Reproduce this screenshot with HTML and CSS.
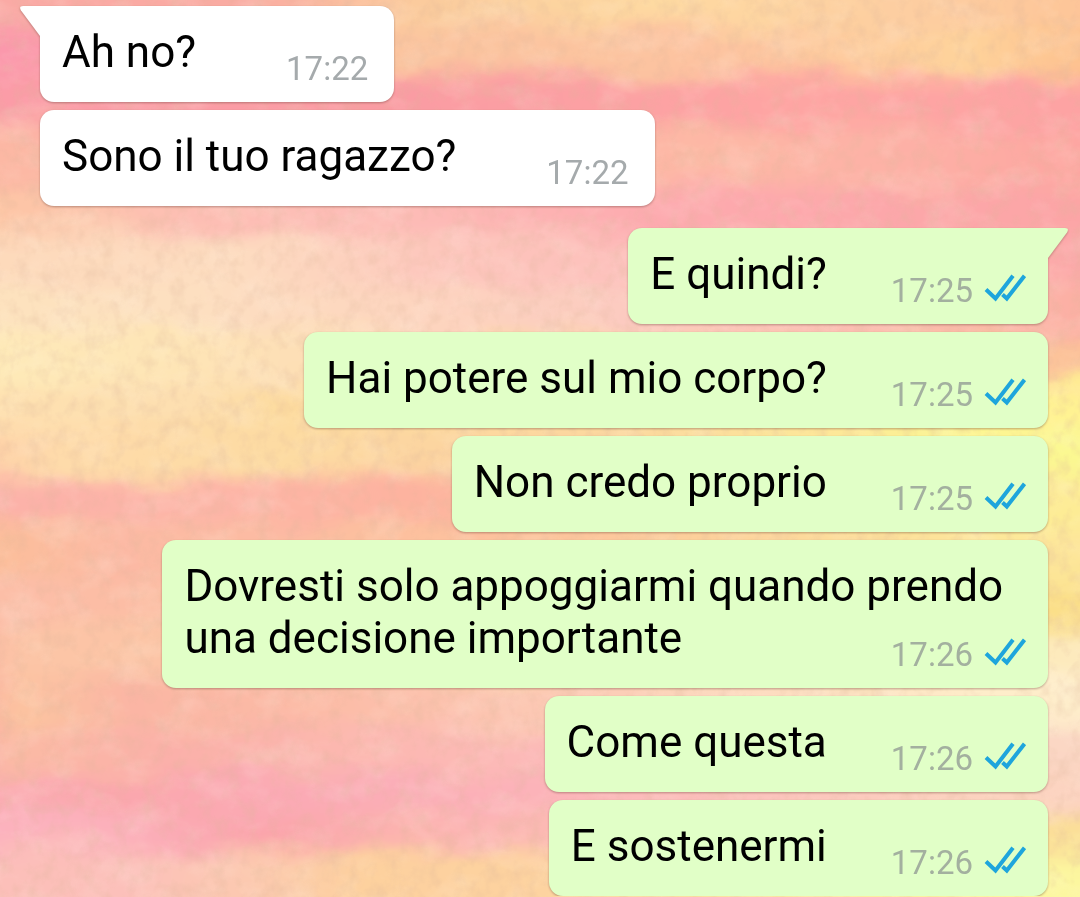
FILE: index.html
```html
<!DOCTYPE html>
<html lang="it">
<head>
  <meta charset="UTF-8" />
  <meta name="viewport" content="width=device-width, initial-scale=1" />
  <title>Chat</title>
  <link rel="stylesheet" href="styles.css">
</head>
<body>
  <!-- Watercolor wallpaper -->
  <svg class="wallpaper" viewBox="0 0 1080 897" preserveAspectRatio="none" aria-hidden="true">
    <defs>
      <linearGradient id="w1"><stop offset="0" stop-color="#faa9a6"/><stop offset=".25" stop-color="#f9aba2"/><stop offset=".4" stop-color="#fbcb9d"/><stop offset=".6" stop-color="#fedaa1"/><stop offset=".8" stop-color="#fdcea1"/><stop offset="1" stop-color="#fdc396"/></linearGradient>
      <linearGradient id="w2"><stop offset="0" stop-color="#fb97ad"/><stop offset=".2" stop-color="#fb9ca8"/><stop offset=".38" stop-color="#fbc49f"/><stop offset=".65" stop-color="#fdc3a0"/><stop offset=".85" stop-color="#fed39b"/><stop offset="1" stop-color="#fdbb8b"/></linearGradient>
      <linearGradient id="w3"><stop offset="0" stop-color="#fb9ca8"/><stop offset=".4" stop-color="#fa9ca3"/><stop offset=".7" stop-color="#fea5a3"/><stop offset="1" stop-color="#fda3a3"/></linearGradient>
      <linearGradient id="w4"><stop offset="0" stop-color="#fcb9a4"/><stop offset=".5" stop-color="#fdb0a6"/><stop offset=".63" stop-color="#fdb9a5"/><stop offset=".8" stop-color="#fdb1a6"/><stop offset="1" stop-color="#fda29f"/></linearGradient>
      <linearGradient id="w5"><stop offset="0" stop-color="#fdc8a0"/><stop offset=".2" stop-color="#fdbfb4"/><stop offset=".4" stop-color="#fdbab6"/><stop offset=".6" stop-color="#fdaaaf"/><stop offset="1" stop-color="#fca4a4"/></linearGradient>
      <linearGradient id="w6"><stop offset="0" stop-color="#fdd9ba"/><stop offset=".25" stop-color="#fddcc0"/><stop offset=".42" stop-color="#fdc6bc"/><stop offset=".6" stop-color="#fdbfbc"/><stop offset="1" stop-color="#fca4a6"/></linearGradient>
      <linearGradient id="w7"><stop offset="0" stop-color="#fde3be"/><stop offset=".2" stop-color="#fde0c0"/><stop offset=".4" stop-color="#fdd4bf"/><stop offset=".6" stop-color="#fcc9c0"/><stop offset="1" stop-color="#fcaca0"/></linearGradient>
      <linearGradient id="w8"><stop offset="0" stop-color="#feebb8"/><stop offset=".2" stop-color="#fee5b6"/><stop offset=".35" stop-color="#fddcb6"/><stop offset=".85" stop-color="#fcc6a0"/><stop offset="1" stop-color="#fcc095"/></linearGradient>
      <linearGradient id="w9"><stop offset="0" stop-color="#fee2b0"/><stop offset=".2" stop-color="#fddfb0"/><stop offset=".3" stop-color="#fddb9e"/><stop offset=".6" stop-color="#fddaa0"/><stop offset=".87" stop-color="#fff393"/><stop offset="1" stop-color="#fff292"/></linearGradient>
      <linearGradient id="w10"><stop offset="0" stop-color="#fdc9a6"/><stop offset=".1" stop-color="#fedbaa"/><stop offset=".3" stop-color="#fddba2"/><stop offset=".5" stop-color="#fccf9f"/><stop offset=".87" stop-color="#fbf892"/><stop offset="1" stop-color="#fbf890"/></linearGradient>
      <linearGradient id="w11"><stop offset="0" stop-color="#fcb0a9"/><stop offset=".2" stop-color="#fdb5a8"/><stop offset=".4" stop-color="#fdb39f"/><stop offset=".87" stop-color="#fdec96"/><stop offset="1" stop-color="#fdec94"/></linearGradient>
      <linearGradient id="w12"><stop offset="0" stop-color="#fdc196"/><stop offset=".15" stop-color="#fcb9a4"/><stop offset=".5" stop-color="#fdc49c"/><stop offset=".87" stop-color="#fde69a"/><stop offset="1" stop-color="#fde69a"/></linearGradient>
      <linearGradient id="w13"><stop offset="0" stop-color="#fcbea8"/><stop offset=".15" stop-color="#fcbda5"/><stop offset=".87" stop-color="#fbdf8a"/><stop offset="1" stop-color="#fbdf88"/></linearGradient>
      <linearGradient id="w14"><stop offset="0" stop-color="#fbb6a4"/><stop offset=".08" stop-color="#fcc5a6"/><stop offset=".3" stop-color="#fcc5a6"/><stop offset=".87" stop-color="#fdeab8"/><stop offset="1" stop-color="#fdeac0"/></linearGradient>
      <linearGradient id="w15"><stop offset="0" stop-color="#fba7a0"/><stop offset=".07" stop-color="#fcc3a0"/><stop offset=".16" stop-color="#fbb5a4"/><stop offset=".3" stop-color="#fcbaa5"/><stop offset=".48" stop-color="#fcc6b2"/><stop offset=".87" stop-color="#feedca"/><stop offset="1" stop-color="#feedcb"/></linearGradient>
      <linearGradient id="w16"><stop offset="0" stop-color="#fbaaaf"/><stop offset=".06" stop-color="#fbbaa4"/><stop offset=".2" stop-color="#fbb0a9"/><stop offset=".35" stop-color="#fcb8b0"/><stop offset=".5" stop-color="#fcb9b8"/><stop offset=".87" stop-color="#fbd7c4"/></linearGradient>
      <linearGradient id="w17"><stop offset="0" stop-color="#fbadb4"/><stop offset=".15" stop-color="#fba7ad"/><stop offset=".3" stop-color="#fbaab5"/><stop offset=".5" stop-color="#fcb3b9"/><stop offset=".87" stop-color="#fcd3c0"/></linearGradient>
      <linearGradient id="w18"><stop offset="0" stop-color="#fcb3bf"/><stop offset=".15" stop-color="#fcb0bb"/><stop offset=".27" stop-color="#fba4ab"/><stop offset=".4" stop-color="#fcb4b0"/><stop offset=".5" stop-color="#fcb8b4"/><stop offset=".87" stop-color="#fbde98"/></linearGradient>
      <linearGradient id="w19"><stop offset="0" stop-color="#fcbeb8"/><stop offset=".15" stop-color="#fcc0ba"/><stop offset=".25" stop-color="#fcc9b0"/><stop offset=".35" stop-color="#fdd09e"/><stop offset=".5" stop-color="#fdd3a0"/><stop offset=".87" stop-color="#fcf79f"/></linearGradient>
      <filter id="wash" x="0" y="0" width="100%" height="100%">
        <feGaussianBlur stdDeviation="6 9" result="soft"/>
        <feTurbulence type="fractalNoise" baseFrequency=".009 .02" numOctaves="4" seed="4" result="flow"/>
        <feDisplacementMap in="soft" in2="flow" scale="40" xChannelSelector="R" yChannelSelector="G"/>
      </filter>
      <filter id="grain" x="0" y="0" width="100%" height="100%">
        <feTurbulence type="fractalNoise" baseFrequency=".07 .06" numOctaves="3" seed="9"/>
        <feColorMatrix values="0 0 0 0 .72  0 0 0 0 .46  0 0 0 0 .32  1.6 0 0 0 -.7"/>
      </filter>
      <filter id="paper" x="0" y="0" width="100%" height="100%">
        <feTurbulence type="fractalNoise" baseFrequency=".025 .035" numOctaves="4" seed="21"/>
        <feColorMatrix values="0 0 0 0 1  0 0 0 0 .9  0 0 0 0 .8  2 0 0 0 -.9"/>
      </filter>
    </defs>
    <g filter="url(#wash)">
      <rect x="-60" y="-60" width="1200" height="90" fill="url(#w1)"/>
      <rect x="-60" y="28" width="1200" height="50" fill="url(#w2)"/>
      <rect x="-60" y="76" width="1200" height="58" fill="url(#w3)"/>
      <rect x="-60" y="132" width="1200" height="58" fill="url(#w4)"/>
      <rect x="-60" y="188" width="1200" height="50" fill="url(#w5)"/>
      <rect x="-60" y="236" width="1200" height="50" fill="url(#w6)"/>
      <rect x="-60" y="284" width="1200" height="50" fill="url(#w7)"/>
      <rect x="-60" y="332" width="1200" height="50" fill="url(#w8)"/>
      <rect x="-60" y="380" width="1200" height="52" fill="url(#w9)"/>
      <rect x="-60" y="430" width="1200" height="48" fill="url(#w10)"/>
      <rect x="-60" y="476" width="1200" height="52" fill="url(#w11)"/>
      <rect x="-60" y="526" width="1200" height="52" fill="url(#w12)"/>
      <rect x="-60" y="576" width="1200" height="54" fill="url(#w13)"/>
      <rect x="-60" y="628" width="1200" height="52" fill="url(#w14)"/>
      <rect x="-60" y="678" width="1200" height="54" fill="url(#w15)"/>
      <rect x="-60" y="730" width="1200" height="46" fill="url(#w16)"/>
      <rect x="-60" y="774" width="1200" height="44" fill="url(#w17)"/>
      <rect x="-60" y="816" width="1200" height="38" fill="url(#w18)"/>
      <rect x="-60" y="852" width="1200" height="110" fill="url(#w19)"/>
    </g>
    <rect width="1080" height="897" filter="url(#paper)" opacity=".22"/>
    <rect width="1080" height="897" filter="url(#grain)" opacity=".38"/>
  </svg>

  <!-- Shared icons -->
  <svg class="icons" aria-hidden="true">
    <symbol id="ticks" viewBox="0 0 42 28">
      <path d="M2 15.500 L11.500 24.500 L29 1.800 M18.500 20.500 L22.800 24.500 L40.500 1.800" fill="none" stroke="#1ea5dc" stroke-width="4"/>
    </symbol>
    <symbol id="tail" viewBox="0 0 22 32">
      <path d="M22 0 H3 Q-1.500 0 1 4.500 L20 30 H22 Z" fill="currentColor"/>
    </symbol>
  </svg>

  <main class="chat">
    <div class="bubble received first">
      <svg class="tail"><use href="#tail"/></svg>
      <span class="text">Ah no?</span>
      <span class="meta"><time>17:22</time></span>
    </div>
    <div class="bubble received">
      <span class="text">Sono il tuo ragazzo?</span>
      <span class="meta"><time>17:22</time></span>
    </div>

    <div class="bubble sent first">
      <svg class="tail"><use href="#tail"/></svg>
      <span class="text">E quindi?</span>
      <span class="meta"><time>17:25</time><svg class="ticks" role="img" aria-label="Letto"><use href="#ticks"/></svg></span>
    </div>
    <div class="bubble sent">
      <span class="text">Hai potere sul mio corpo?</span>
      <span class="meta"><time>17:25</time><svg class="ticks" role="img" aria-label="Letto"><use href="#ticks"/></svg></span>
    </div>
    <div class="bubble sent">
      <span class="text">Non credo proprio</span>
      <span class="meta"><time>17:25</time><svg class="ticks" role="img" aria-label="Letto"><use href="#ticks"/></svg></span>
    </div>
    <div class="bubble sent">
      <span class="text">Dovresti solo appoggiarmi quando prendo una decisione importante</span>
      <span class="meta"><time>17:26</time><svg class="ticks" role="img" aria-label="Letto"><use href="#ticks"/></svg></span>
    </div>
    <div class="bubble sent">
      <span class="text">Come questa</span>
      <span class="meta"><time>17:26</time><svg class="ticks" role="img" aria-label="Letto"><use href="#ticks"/></svg></span>
    </div>
    <div class="bubble sent">
      <span class="text">E sostenermi</span>
      <span class="meta"><time>17:26</time><svg class="ticks" role="img" aria-label="Letto"><use href="#ticks"/></svg></span>
    </div>
  </main>
</body>
</html>
```

FILE: styles.css
```css
* {
  box-sizing: border-box;
}
body {
  margin: 0;
  background-color: #fcbfa8;
  font-family: Roboto, sans-serif;
}
.wallpaper {
  position: fixed;
  inset: 0;
  width: 100%;
  height: 100%;
  z-index: -1;
}
.icons {
  position: absolute;
  width: 0;
  height: 0;
}
.chat {
  display: flex;
  flex-direction: column;
  align-items: flex-start;
  gap: 8px;
  padding: 6px 32px 0 40px;
}
.bubble {
  position: relative;
  display: flow-root;
  max-width: 82vw;
  padding: 20px 22px 13px;
  border-radius: 14px;
  font-size: 44px;
  line-height: 52px;
  color: #000;
  filter: drop-shadow(0 1px 1px rgba(90, 50, 40, 0.4));
}
.received {
  background-color: #fff;
  padding-right: 26px;
}
.sent {
  align-self: flex-end;
  background-color: #e1ffc7;
}
.sent.first {
  margin-top: 14px;
  border-top-right-radius: 0;
}
.received.first {
  border-top-left-radius: 0;
}
.tail {
  position: absolute;
  top: 0;
  width: 22px;
  height: 32px;
}
.received .tail {
  left: -20px;
  color: #fff;
}
.sent .tail {
  right: -20px;
  color: #e1ffc7;
  transform: scaleX(-1);
}
.meta {
  float: right;
  display: flex;
  align-items: center;
  gap: 11px;
  margin-top: 23px;
  margin-left: 64px;
  font-size: 33px;
  line-height: 40px;
  color: #a5aaac;
}
.received .meta {
  margin-left: 90px;
}
.sent .meta {
  color: #a3b09f;
}
.ticks {
  width: 42px;
  height: 28px;
  margin-bottom: 6px;
}
```
